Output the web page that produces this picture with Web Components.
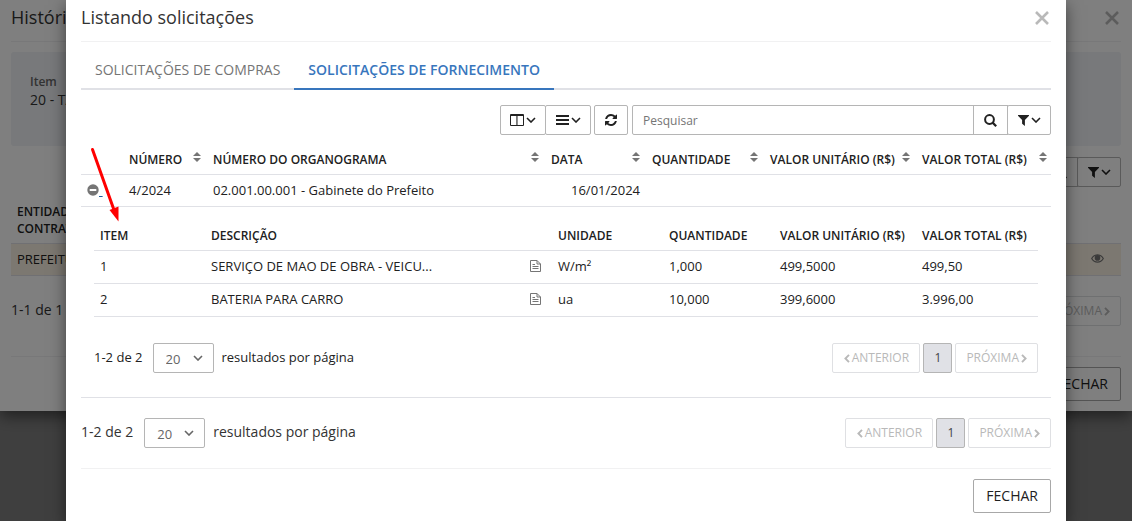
<!DOCTYPE html>
<html lang="pt-BR">
<head>
<meta charset="utf-8">
<meta name="viewport" content="width=device-width, initial-scale=1">
<title>Listando solicitações</title>
<style>
  html, body { margin: 0; min-height: 100%; background: #fff; }
  body { font: 13px/16px "Open Sans", "Noto Sans", sans-serif; color: #212121; }
</style>
</head>
<body>
<purchase-page></purchase-page>

<script>
const BASE = `*, *::before, *::after { box-sizing: border-box; } button, input, select { font: inherit; color: inherit; margin: 0; }`;

function define(name, css, html) {
  const tpl = document.createElement('template');
  customElements.define(name, class extends HTMLElement {
    constructor() { super(); this.attachShadow({ mode: 'open' }); }
    connectedCallback() {
      if (this.shadowRoot.childNodes.length) return;
      tpl.innerHTML = `<style>${BASE}${css}</style>` + (typeof html === 'function' ? html(this) : html);
      this.shadowRoot.append(tpl.content.cloneNode(true));
    }
  });
}

/* Icons: [width, height, markup] */
const ICONS = {
  close: [14, 14, '<path d="M1 1 L13 13 M13 1 L1 13" fill="none" stroke="currentColor" stroke-width="2.600"/>'],
  columns: [14, 12, '<path fill-rule="evenodd" fill="currentColor" d="M1 0h12a1 1 0 0 1 1 1v10a1 1 0 0 1-1 1H1a1 1 0 0 1-1-1V1a1 1 0 0 1 1-1zM1 2v9h5.400V2zM7.500 2v9H13V2z"/>'],
  bars: [13, 11, '<path fill="currentColor" d="M0 0h13v2H0zM0 4h13v2H0zM0 8h13v2H0z"/>'],
  down: [10, 6, '<path d="M1 1 L5 5 L9 1" fill="none" stroke="currentColor" stroke-width="1.600"/>'],
  left: [6, 9, '<path d="M5 .800 L1.400 4.500 L5 8.200" fill="none" stroke="currentColor" stroke-width="1.900"/>'],
  right: [6, 9, '<path d="M1 .800 L4.600 4.500 L1 8.200" fill="none" stroke="currentColor" stroke-width="1.900"/>'],
  refresh: [12, 12, '<path transform="scale(.0078125)" fill="currentColor" d="M1511 928q0 5-1 7-64 268-268 434.500T764 1536q-146 0-282.500-55T238 1324l-129 129q-19 19-45 19t-45-19-19-45V960q0-26 19-45t45-19h448q26 0 45 19t19 45-19 45l-137 137q71 66 161 102t187 36q134 0 250-65t186-179q11-17 53-117 8-23 30-23h192q13 0 22.500 9.500t9.500 22.500zm25-800v448q0 26-19 45t-45 19h-448q-26 0-45-19t-19-45 19-45l138-138Q969 256 768 256q-134 0-250 65T332 500q-11 17-53 117-8 23-30 23H50q-13 0-22.500-9.500T18 608v-7q65-268 270-434.500T768 0q146 0 284 55.500T1297 212l130-129q19-19 45-19t45 19 19 45z"/>'],
  search: [13, 13, '<circle cx="5.500" cy="5.500" r="4.400" fill="none" stroke="currentColor" stroke-width="2"/><path d="M8.600 8.600 L12.200 12.200" stroke="currentColor" stroke-width="2.200"/>'],
  filter: [11, 11, '<path fill="currentColor" d="M0 0h11v.800L6.900 5.100V11L4.100 8.700V5.100L0 .800z"/>'],
  sort: [8, 10, '<path fill="currentColor" d="M0 4 L4 0 L8 4zM0 6h8L4 10z"/>'],
  minus: [12, 12, '<circle cx="6" cy="6" r="5.700" fill="currentColor"/><path fill="#fff" d="M2.700 5h6.600v2H2.700z"/>'],
  file: [11, 12, '<path fill="none" stroke="currentColor" d="M.500.500h6.500l3.500 3.500v7.500H.500zM7 .500V4h3.500M2.500 4.500h2.500M2.500 6.500h6M2.500 8.500h6"/>'],
  eye: [13, 9, '<path fill="none" stroke="currentColor" stroke-width="1.200" d="M.700 4.500C3.500-.300 9.500-.300 12.300 4.500 9.500 9.300 3.500 9.300.700 4.500z"/><circle cx="6.500" cy="3.900" r="2.800" fill="currentColor"/>']
};
define('ui-icon',
  `:host { display: inline-block; flex: none; } svg { display: block; }`,
  el => { const [w, h, m] = ICONS[el.getAttribute('name')]; return `<svg width="${w}" height="${h}" viewBox="0 0 ${w} ${h}" aria-hidden="true">${m}</svg>`; });

/* Bordered button; variants by attribute */
define('ui-button',
  `:host { display: inline-block; }
   button { display: flex; align-items: center; justify-content: center; gap: 2px; width: 100%; height: 30px; padding: 0 var(--pad, 10px); border: 1px solid #b5b5b5; border-radius: var(--radius, 2px); background: #fff; white-space: nowrap; }
   :host([size=large]) button { height: 34px; padding: 0 12px; font-size: 14px; border-color: #a8a8a8; }
   :host([kind=page]) button { font-size: 12px; font-weight: 500; border-color: #dfe0e3; color: #b9b9b9; }
   :host([kind=current]) button { font-size: 12px; border-color: #b5b5b5; background: #e0e1e6; color: #444; }`,
  el => `<button type="button" ${el.hasAttribute('label') ? `aria-label="${el.getAttribute('label')}"` : ''} ${el.getAttribute('kind') === 'page' ? 'disabled' : ''}><slot></slot></button>`);

/* Dialog frame: title, body, footer */
define('modal-dialog',
  `:host { display: block; background: #fff; padding: 0 var(--gutter) var(--foot); box-shadow: 0 5px 15px rgba(0,0,0,.5); }
   header { display: flex; align-items: center; justify-content: space-between; height: 42px; padding-bottom: 7px; border-bottom: 1px solid #f1f1f2; }
   h2 { margin: 0; font-size: 18px; line-height: 24px; font-weight: 400; color: #333; }
   .close { display: block; margin-top: 4px; padding: 0 2px; border: 0; background: none; color: #b9b9b9; }
   section { padding: 10px 0 var(--tail); }
   footer { display: flex; justify-content: flex-end; border-top: 1px solid #f1f1f2; padding-top: 10px; }`,
  `<header><h2><slot name="title"></slot></h2><button class="close" type="button" aria-label="Fechar janela"><ui-icon name="close"></ui-icon></button></header>
   <section><slot></slot></section>
   <footer><ui-button size="large">FECHAR</ui-button></footer>`);

define('tab-strip',
  `:host { display: block; border-bottom: 2px solid #e0e1e6; }
   nav { display: flex; margin-bottom: -2px; }
   a { padding: 8px 14px; height: 38px; font-size: 14px; line-height: 20px; color: #757575; text-decoration: none; border-bottom: 2px solid transparent; }
   a[aria-current] { color: #3876bd; font-weight: 600; border-color: #3876bd; }`,
  `<nav><a href="#compras">SOLICITAÇÕES DE COMPRAS</a><a href="#fornecimento" aria-current="page">SOLICITAÇÕES DE FORNECIMENTO</a></nav>`);

define('search-bar',
  `:host { display: flex; justify-content: flex-end; }
   .group { display: flex; }
   .group > * + * { margin-left: -1px; }
   .views { margin-right: 3px; }
   .reload { margin-right: 4px; }
   .views ui-button { width: 46px; --pad: 8px; }
   .find { flex: 0 1 419px; }
   input { flex: 1; min-width: 0; height: 30px; padding: 0 10px; border: 1px solid #b5b5b5; border-radius: 2px 0 0 2px; font-size: 12px; background: #fff; outline: 0; }
   input::placeholder { color: #757575; opacity: 1; }
   .go { width: 35px; --pad: 8px; --radius: 0; }
   .filter { width: 44px; --pad: 8px; }`,
  `<div class="group views"><ui-button label="Colunas"><ui-icon name="columns"></ui-icon><ui-icon name="down"></ui-icon></ui-button><ui-button label="Linhas"><ui-icon name="bars"></ui-icon><ui-icon name="down"></ui-icon></ui-button></div>
   <ui-button class="reload" label="Atualizar"><ui-icon name="refresh"></ui-icon></ui-button>
   <div class="group find"><input type="text" placeholder="Pesquisar" aria-label="Pesquisar"><ui-button class="go" label="Buscar"><ui-icon name="search"></ui-icon></ui-button><ui-button class="filter" label="Filtrar"><ui-icon name="filter"></ui-icon><ui-icon name="down"></ui-icon></ui-button></div>`);

/* Pagination; "brief" shows only the range and the next button */
define('page-nav',
  `:host { display: flex; align-items: center; justify-content: space-between; color: #333; }
   .count { display: flex; align-items: center; height: 30px; gap: 8px; }
   .size { display: grid; align-items: center; margin-left: var(--lead, 3px); color: #666; }
   select { grid-area: 1 / 1; width: 61px; height: 30px; padding: 2px 12px 0; border: 1px solid #b5b5b5; border-radius: 2px; background: #fff; appearance: none; font-size: 13px; }
   .size ui-icon { grid-area: 1 / 1; justify-self: end; margin-right: 11px; pointer-events: none; }
   .text { padding-bottom: 3px; }
   .pages { display: flex; gap: 3px; }
   .prev { width: 88px; }
   .num { width: 29px; }`,
  el => {
    const brief = el.hasAttribute('brief');
    const size = `<label class="size"><select aria-label="Resultados por página"><option>20</option></select><ui-icon name="down"></ui-icon></label><span class="text">resultados por página</span>`;
    const prev = `<ui-button class="prev" kind="page"><ui-icon name="left"></ui-icon>ANTERIOR</ui-button><ui-button class="num" kind="current">1</ui-button>`;
    return `<div class="count"><span class="text">${el.getAttribute('range')}</span>${brief ? '' : size}</div>
     <div class="pages">${brief ? '' : prev}<ui-button kind="page">PRÓXIMA<ui-icon name="right"></ui-icon></ui-button></div>`;
  });

const TABLE = `
   :host { display: block; }
   table { width: 100%; table-layout: fixed; border-collapse: separate; border-spacing: 0; }
   th, td { text-align: left; padding: 0 4px 0 8px; border-bottom: 1px solid #e0e1e6; white-space: nowrap; }
   th { font-size: 12px; font-weight: 600; }
   td { font-size: 13px; }`;

define('items-table', TABLE + `
   :host { padding: 13px 13px 24px; }
   th { height: 31px; } td { height: 33px; }
   th { padding: 2px 6px 0; } td { padding: 0 6px 2px; }
   .desc { display: flex; align-items: center; justify-content: space-between; padding-right: 5px; }
   .desc ui-icon { color: #757575; }
   page-nav { margin-top: 26px; color: #212121; font-size: 13px; --lead: 2px; }`,
  () => {
    const rows = [['1', 'SERVIÇO DE MAO DE OBRA - VEICU...', 'W/m²', '1,000', '499,5000', '499,50'], ['2', 'BATERIA PARA CARRO', 'ua', '10,000', '399,6000', '3.996,00']];
    return `<table><colgroup><col style="width:111px"><col><col style="width:111px"><col style="width:111px"><col style="width:142px"><col style="width:122px"></colgroup>
    <thead><tr><th>ITEM</th><th>DESCRIÇÃO</th><th>UNIDADE</th><th>QUANTIDADE</th><th>VALOR UNITÁRIO (R$)</th><th>VALOR TOTAL (R$)</th></tr></thead>
    <tbody>${rows.map(r => '<tr>' + r.map((c, i) => i === 1 ? `<td><div class="desc">${c}<ui-icon name="file"></ui-icon></div></td>` : `<td>${c}</td>`).join('') + '</tr>').join('')}</tbody></table>
    <page-nav range="1-2 de 2"></page-nav>`;
  });

define('requests-table', TABLE + `
   th, td { height: 32px; }
   th { padding-top: 2px; } td { padding-bottom: 2px; }
   th div { display: flex; justify-content: space-between; align-items: center; }
   th ui-icon { color: #757575; margin-bottom: 5px; }
   .date { text-align: right; }
   a { display: flex; align-items: center; color: #1c5a9c; }
   a ui-icon { color: #757575; }
   td:first-child { padding-left: 6px; }
   td.nested { padding: 0; height: auto; }`,
  () => `<table><colgroup><col style="width:40px"><col style="width:84px"><col><col style="width:101px"><col style="width:118px"><col style="width:152px"><col style="width:137px"></colgroup>
    <thead><tr><th></th>${['NÚMERO', 'NÚMERO DO ORGANOGRAMA', 'DATA', 'QUANTIDADE', 'VALOR UNITÁRIO (R$)', 'VALOR TOTAL (R$)'].map(t => `<th><div>${t}<ui-icon name="sort"></ui-icon></div></th>`).join('')}</tr></thead>
    <tbody><tr><td><a href="#itens" aria-label="Recolher itens"><ui-icon name="minus"></ui-icon><u>&nbsp;</u></a></td><td>4/2024</td><td>02.001.00.001 - Gabinete do Prefeito</td><td class="date">16/01/2024</td><td></td><td></td><td></td></tr>
    <tr><td class="nested" colspan="7"><items-table></items-table></td></tr></tbody></table>`);

define('history-table', TABLE + `
   th { height: 57px; line-height: 17px; padding: 8px 6px 6px; vertical-align: bottom; white-space: normal; }
   td { height: 32px; padding: 0 6px 2px; background: #f9f1e2; }
   td:last-child { padding-right: 17px; color: #757575; }
   td ui-icon { display: block; margin-left: auto; width: 13px; }`,
  `<table><colgroup><col style="width:110px"><col></colgroup><thead><tr><th>ENTIDADE CONTRATANTE</th><th></th></tr></thead>
   <tbody><tr><td>PREFEITURA</td><td><ui-icon name="eye"></ui-icon></td></tr></tbody></table>`);

define('item-panel',
  `:host { display: block; height: 94px; padding: 20px 19px; background: #f0f2f6; border-radius: 3px; }
   b { display: block; font-size: 12px; line-height: 19px; font-weight: 600; color: #666; }
   span { font-size: 14px; line-height: 18px; color: #333; }`,
  `<b>Item</b><span>20 - TAXA</span>`);

define('purchase-page',
  `:host { display: block; position: relative; min-height: 100vh; overflow: hidden; }
   .shade { position: absolute; inset: 0; background: rgba(0,0,0,.5); }
   .back { position: absolute; inset: 0 0 auto; --gutter: 11px; --foot: 10px; --tail: 30px; }
   .front { position: relative; width: calc(100% - 132px); max-width: 1000px; min-height: 100vh; margin: 0 auto; --gutter: 15px; --foot: 8px; --tail: 20px; }
   .back search-bar { margin-top: 11px; }
   .front search-bar { margin: 15px 0 8px; }
   page-nav { margin-top: 20px; font-size: 14px; }
   .pointer { position: absolute; left: 88px; top: 146px; pointer-events: none; }`,
  `<div class="shade"></div>
   <modal-dialog class="back"><span slot="title">Histórico</span>
     <item-panel></item-panel><search-bar></search-bar><history-table></history-table><page-nav brief range="1-1 de 1"></page-nav>
   </modal-dialog>
   <div class="shade"></div>
   <modal-dialog class="front" role="dialog"><span slot="title">Listando solicitações</span>
     <tab-strip></tab-strip><search-bar></search-bar><requests-table></requests-table><page-nav range="1-2 de 2"></page-nav>
   </modal-dialog>
   <svg class="pointer" width="36" height="80" viewBox="0 0 36 80" aria-hidden="true"><path d="M4.500 3.500 L26 64" stroke="#f00" stroke-width="3" stroke-linecap="round"/><path d="M30.500 75.500 L21.500 64 L30.500 60.500z" fill="#f00"/></svg>`);
</script>
</body>
</html>
